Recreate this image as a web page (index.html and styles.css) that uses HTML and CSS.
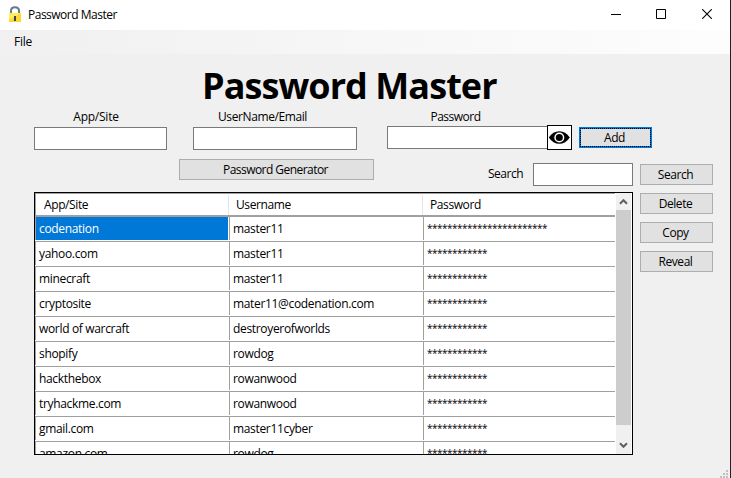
FILE: index.html
```html
<!DOCTYPE html>
<html lang="en">
<head>
<meta charset="utf-8">
<title>Password Master</title>
<link rel="stylesheet" href="styles.css">
</head>
<body>
<div class="window">
  <header class="titlebar">
    <svg class="lock" width="14" height="17" viewBox="0 0 14 17">
      <path d="M3 8V4.8Q3 1.2 7 1.2T11 4.8V8" fill="none" stroke="#617c8b" stroke-width="2"/>
      <path d="M1 7h12v9H1z" fill="#fdd835"/>
      <path d="M1 7h12L1 14z" fill="#ffee58"/>
      <path d="M6 10h2v5H6z" fill="#37474f"/>
    </svg>
    <span class="caption">Password Master</span>
    <div class="controls">
      <svg class="minimize" width="10" height="10" viewBox="0 0 10 10"><path d="M0 5.5h10" stroke="#000"/></svg>
      <svg width="10" height="10" viewBox="0 0 10 10"><path d="M.5 .5h9v9h-9z" fill="none" stroke="#000"/></svg>
      <svg width="10" height="10" viewBox="0 0 10 10"><path d="M.2 .2l9.6 9.6M9.8 .2L.2 9.8" stroke="#000" stroke-width="1.1"/></svg>
    </div>
  </header>
  <nav class="menubar"><span class="file">File</span></nav>
  <main class="content">
    <h1><span>Password Master</span></h1>
    <section class="entry">
      <label class="field app"><span>App/Site</span><input type="text"></label>
      <label class="field user"><span>UserName/Email</span><input type="text"></label>
      <label class="field pass"><span>Password</span><input type="text"></label>
      <button class="eye" aria-label="Show password">
        <svg width="23" height="23" viewBox="0 0 23 23">
          <path d="M.8 11.5Q5 5.2 11.3 5.2T21.8 11.5Q17.6 17.8 11.3 17.8T.8 11.5Z"/>
          <circle cx="11.3" cy="11.5" r="4.3" fill="none" stroke="#fff" stroke-width="1.5"/>
        </svg>
      </button>
      <button class="btn add">Add</button>
    </section>
    <section class="tools">
      <button class="btn generator">Password Generator</button>
      <label class="search"><span>Search</span><input type="text"></label>
    </section>
    <section class="main">
      <div class="grid">
        <div class="table">
          <div class="head"><span>App/Site</span><span>Username</span><span>Password</span></div>
          <div class="row"><span class="selected">codenation</span><span>master11</span><span class="stars">************************</span></div>
          <div class="row"><span>yahoo.com</span><span>master11</span><span class="stars">************</span></div>
          <div class="row"><span>minecraft</span><span>master11</span><span class="stars">************</span></div>
          <div class="row"><span>cryptosite</span><span>mater11@codenation.com</span><span class="stars">************</span></div>
          <div class="row"><span>world of warcraft</span><span>destroyerofworlds</span><span class="stars">************</span></div>
          <div class="row"><span>shopify</span><span>rowdog</span><span class="stars">************</span></div>
          <div class="row"><span>hackthebox</span><span>rowanwood</span><span class="stars">************</span></div>
          <div class="row"><span>tryhackme.com</span><span>rowanwood</span><span class="stars">************</span></div>
          <div class="row"><span>gmail.com</span><span>master11cyber</span><span class="stars">************</span></div>
          <div class="row"><span>amazon.com</span><span>rowdog</span><span class="stars">************</span></div>
        </div>
        <div class="scrollbar">
          <svg width="15" height="17" viewBox="0 0 15 17"><path d="M4 10.8l3.5-3.6 3.5 3.6" fill="none" stroke="#606060" stroke-width="2"/></svg>
          <div class="thumb"></div>
          <svg width="15" height="17" viewBox="0 0 15 17"><path d="M4 6.2l3.5 3.6L11 6.2" fill="none" stroke="#606060" stroke-width="2"/></svg>
        </div>
      </div>
      <div class="actions">
        <button class="btn">Search</button>
        <button class="btn">Delete</button>
        <button class="btn">Copy</button>
        <button class="btn">Reveal</button>
      </div>
    </section>
  </main>
  <svg class="grip" width="8" height="8" viewBox="0 0 8 8"><path d="M6 0h2v2H6zM3 3h2v2H3zM6 3h2v2H6zM0 6h2v2H0zM3 6h2v2H3zM6 6h2v2H6z" fill="#bfbfbf"/></svg>
</div>
</body>
</html>
```

FILE: styles.css
```css
* { box-sizing: border-box; }
body { margin: 0; overflow: hidden; }
body, button, input {
  font: 12px/16px "Open Sans", "Noto Sans", sans-serif;
  letter-spacing: -0.25px;
  color: #000;
}
.window {
  position: relative;
  width: 731px;
  height: 478px;
  background: #f0f0f0;
  border-right: 1px solid #202226;
  overflow: hidden;
}
.titlebar {
  display: flex;
  align-items: center;
  height: 30px;
  padding-left: 8px;
  background: #fff;
}
.lock { margin-top: -2px; }
.caption { margin-left: 6px; letter-spacing: -0.5px; }
.controls { display: flex; gap: 36px; margin: -2px 18px 0 auto; }
.controls svg { display: block; }
.controls .minimize { margin-right: -1px; }
.menubar {
  height: 24px;
  padding: 4px 14px;
  background: linear-gradient(to right, #f0f0f0, #fdfdfd);
}
h1 {
  height: 52px;
  margin: 0;
  padding: 5px 0 0 202px;
  font-size: 36px;
  line-height: 54px;
  font-weight: 700;
  letter-spacing: -0.93px;
  white-space: nowrap;
}
.entry { display: flex; height: 53px; padding: 3px 0 0 34px; }
.field { display: flex; flex-direction: column; }
.field span { height: 18px; text-align: center; white-space: nowrap; }
input {
  display: block;
  height: 23px;
  padding: 2px;
  border: 1px solid #7a7a7a;
  border-radius: 0;
  background: #fff;
  outline: none;
}
.app { width: 133px; }
.app span { padding-right: 9px; }
.user { width: 164px; margin-left: 26px; }
.user span { padding-right: 25px; letter-spacing: -0.4px; }
.pass { width: 161px; margin-left: 30px; }
.pass span { height: 17px; padding-right: 24px; letter-spacing: -0.5px; }
.eye {
  width: 25px;
  height: 25px;
  margin: 16px 0 0 -1px;
  padding: 0;
  border: 1px solid #000;
  background: #fff;
}
.eye svg { display: block; }
.btn {
  display: block;
  width: 73px;
  height: 21px;
  padding: 1px 2px 0 0;
  border: 1px solid #adadad;
  border-radius: 0;
  background: #e1e1e1;
  line-height: 18px;
  letter-spacing: -0.45px;
}
.add {
  margin: 18px 0 0 7px;
  padding-top: 0;
  border: 2px solid #0078d7;
  line-height: 17px;
  outline: 1px dotted #000;
  outline-offset: -2px;
}
.tools { display: flex; height: 33px; padding-left: 179px; }
.generator { width: 195px; letter-spacing: -0.55px; }
.search { display: flex; margin: 4px 0 0 114px; height: 23px; }
.search span { width: 45px; padding-top: 3px; letter-spacing: -0.5px; }
.search input { width: 100px; }
.main { display: flex; padding-left: 34px; }
.grid {
  display: flex;
  width: 599px;
  height: 263px;
  border: 1px solid #000;
  background: #fff;
  overflow: hidden;
}
.table { width: 580px; border-top: 1px solid #a0a0a0; }
.head, .row { display: grid; grid-template-columns: 194px 194px 192px; }
.head {
  height: 23px;
  border-bottom: 2px solid #a0a0a0;
  border-left: 1px solid #a0a0a0;
  grid-template-columns: 193px 194px 192px;
  letter-spacing: -0.4px;
}
.head span { margin: 1px 0 0; padding: 2px 8px; border-right: 1px solid #e5e5e5; }
.head span + span { padding-left: 7px; }
.head span:last-child { border-right: 0; }
.row { height: 25px; border-bottom: 1px solid #a0a0a0; background: #fff; letter-spacing: -0.33px; }
.row span {
  height: 23px;
  padding: 4px 3px;
  border-left: 1px solid #a0a0a0;
  white-space: nowrap;
}
.row .selected { color: #fff; background: #0078d7; margin-right: 1px; }
.row .stars { padding-top: 3px; font-size: 10px; letter-spacing: -0.51px; }
.scrollbar { display: flex; flex-direction: column; width: 15px; margin-left: 1px; background: #f0f0f0; }
.scrollbar svg { display: block; }
.thumb { height: 215px; background: #cdcdcd; margin-bottom: 12px; }
.actions { display: flex; flex-direction: column; gap: 8px; margin: -28px 0 0 7px; }
.grip { position: absolute; right: 2px; bottom: 0; }
```
